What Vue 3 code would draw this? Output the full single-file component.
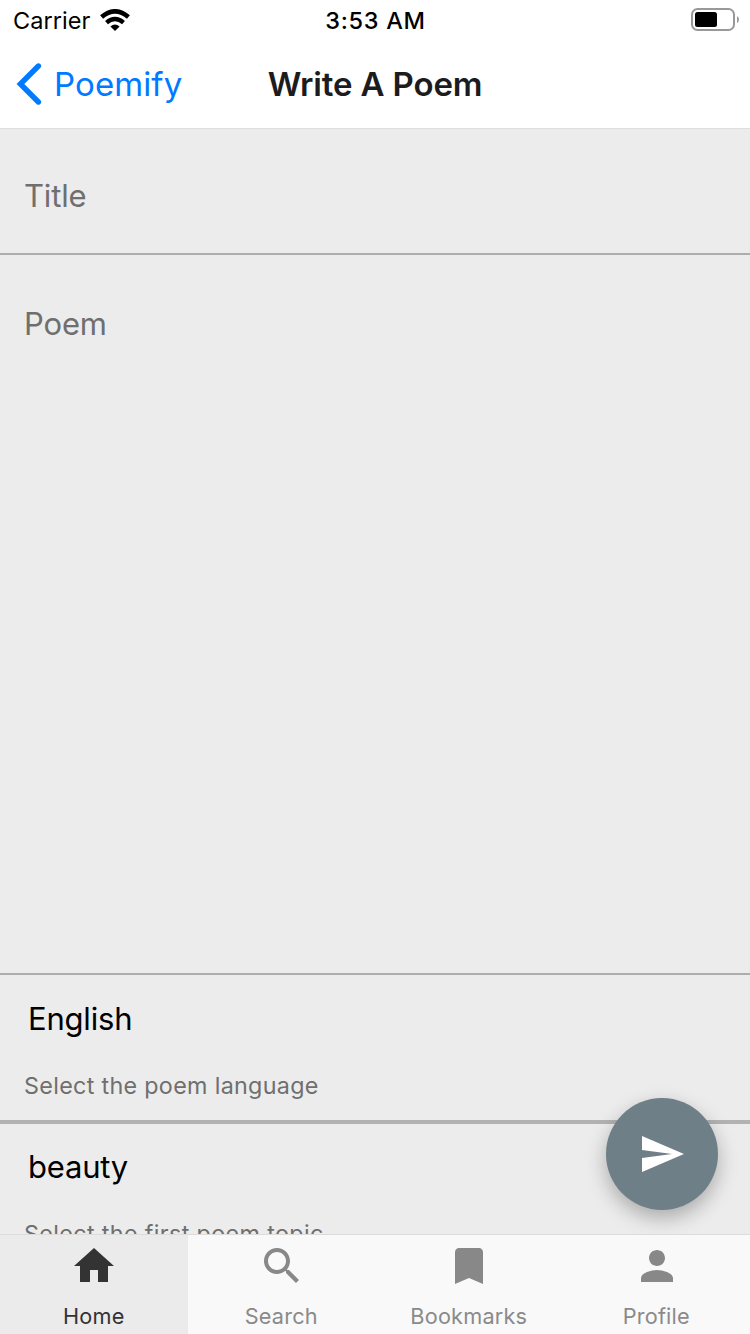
<script setup>
const tabs = [
  { name: 'Home', icon: 'M10 20v-6h4v6h5v-8h3L12 3 2 12h3v8z' },
  {
    name: 'Search',
    icon: 'M15.5 14h-.79l-.28-.27C15.41 12.59 16 11.11 16 9.5 16 5.91 13.09 3 9.5 3S3 5.91 3 9.5 5.91 16 9.5 16c1.61 0 3.09-.59 4.23-1.57l.27.28v.79l5 4.99L20.49 19l-4.99-5zm-6 0C7.01 14 5 11.99 5 9.5S7.01 5 9.5 5 14 7.01 14 9.5 11.99 14 9.5 14z',
  },
  { name: 'Bookmarks', icon: 'M17 3H7c-1.1 0-2 .9-2 2v16l7-3 7 3V5c0-1.1-.9-2-2-2z' },
  {
    name: 'Profile',
    icon: 'M12 12c2.21 0 4-1.79 4-4s-1.79-4-4-4-4 1.79-4 4 1.79 4 4 4zm0 2c-2.67 0-8 1.34-8 4v2h16v-2c0-2.66-5.33-4-8-4z',
  },
]
</script>

<template>
  <div class="screen">
    <header>
      <div class="status">
        <div class="side">
          <span class="carrier">Carrier</span>
          <svg class="wifi" width="30" height="22" viewBox="0 0 30 22">
            <path d="M15 22 10.4 17.4Q15 13.8 19.6 17.4Z" />
            <path d="M6.5 13.6Q15 6.4 23.5 13.6" fill="none" stroke="#000" stroke-width="4.4" />
            <path d="M1.6 8.1Q15-3.4 28.4 8.1" fill="none" stroke="#000" stroke-width="4.6" />
          </svg>
        </div>
        <span class="time">3:53 AM</span>
        <div class="side right">
          <svg class="battery" width="48" height="24" viewBox="0 0 48 24">
            <rect x="1" y="1" width="42" height="21" rx="5.5" fill="none" stroke="#999" stroke-width="2" />
            <rect x="4" y="4" width="22" height="15" rx="2.5" />
            <path d="M46 8q2 1 2 3.5T46 15z" fill="#999" />
          </svg>
        </div>
      </div>
      <nav class="nav">
        <a class="back">
          <svg width="26" height="42" viewBox="0 0 26 42">
            <path d="M22.4 3 4.4 21 22.4 39" fill="none" stroke="#007aff" stroke-width="5.4" stroke-linecap="round" />
          </svg>
          <span class="back-label">Poemify</span>
        </a>
        <h1>Write A Poem</h1>
        <span></span>
      </nav>
    </header>
    <main>
      <div class="field title"><span class="ph-title">Title</span></div>
      <div class="field poem"><span class="ph-poem">Poem</span></div>
      <div class="select">
        <div class="value">English</div>
        <div class="hint">Select the poem language</div>
      </div>
      <div class="select">
        <div class="value">beauty</div>
        <div class="hint topic">Select the first poem topic</div>
      </div>
    </main>
    <button class="fab">
      <svg width="48" height="48" viewBox="0 0 24 24"><path d="M2.01 21 23 12 2.01 3 2 10l15 2-15 2z" /></svg>
    </button>
    <footer>
      <div v-for="(tab, i) in tabs" :key="tab.name" class="tab" :class="{ active: i === 0 }">
        <svg width="48" height="48" viewBox="0 0 24 24"><path :d="tab.icon" /></svg>
        <span>{{ tab.name }}</span>
      </div>
    </footer>
  </div>
</template>

<style>
body { margin: 0; }
</style>

<style scoped>
.screen {
  position: relative;
  display: flex;
  flex-direction: column;
  width: 750px;
  height: 1334px;
  overflow: hidden;
  background: #ececec;
  font-family: Inter, "Liberation Sans", sans-serif;
}
header { height: 128px; flex: none; background: #fff; border-bottom: 1px solid #dedede; }
.status { display: grid; grid-template-columns: 1fr auto 1fr; height: 40px; color: #000; }
.side { display: flex; align-items: flex-start; }
.carrier { width: 87px; padding-left: 13px; box-sizing: border-box; font-size: 23.5px; line-height: 42px; letter-spacing: 0.05px; white-space: nowrap; flex: none; }
.wifi { margin: 9px 0 0 13px; }
.right { justify-content: flex-end; }
.battery { margin: 8px 11px 0 0; }
.time { font-size: 23.5px; font-weight: 500; line-height: 41px; letter-spacing: 0.7px; padding-left: 1px; }
.nav { display: grid; grid-template-columns: 1fr auto 1fr; height: 88px; align-items: center; }
.back { display: flex; align-items: center; padding-left: 16px; color: #007aff; }
.back-label { margin-left: 12px; font-size: 33px; line-height: 88px; letter-spacing: 0.1px; }
h1 { margin: 0; font-size: 33px; font-weight: 600; line-height: 88px; color: #1c1c1e; letter-spacing: -0.15px; }
main { flex: 1; min-height: 0; overflow: hidden; }
.field { box-sizing: border-box; padding-left: 24px; border-bottom: 2px solid #adadad; color: #6f6f6f; font-size: 31px; line-height: 40px; letter-spacing: -0.15px; }
.title { height: 126px; padding-top: 47px; }
.poem { height: 720px; padding-top: 49px; }
.select { box-sizing: border-box; height: 149px; padding: 24px 0 0 28px; border-bottom: 4px solid #b2b2b2; }
.select + .select { padding-top: 23px; }
.value { font-size: 31px; line-height: 40px; color: #000; letter-spacing: -0.2px; }
.hint { margin: 32px 0 0 -4px; font-size: 23.3px; line-height: 30px; color: #6f6f6f; letter-spacing: 0.32px; white-space: nowrap; }
.topic { letter-spacing: 0.37px; }
.fab {
  position: absolute;
  right: 32px;
  bottom: 124px;
  display: flex;
  align-items: center;
  justify-content: center;
  width: 112px;
  height: 112px;
  padding: 0;
  border: 0;
  border-radius: 50%;
  background: #6e7f87;
  box-shadow: 0 8px 20px rgba(0, 0, 0, 0.28);
  fill: #fff;
}
footer { position: relative; display: flex; flex: none; height: 99px; border-top: 1px solid #dcdcdc; background: #f9f9f9; }
.tab { display: flex; flex: 1; flex-direction: column; align-items: center; padding-top: 7px; box-sizing: border-box; color: #8a8a8a; fill: #888; }
.tab svg { flex: none; margin-left: 1px; }
.tab span { margin-top: 11px; font-size: 21.7px; line-height: 30px; letter-spacing: 0.2px; }
.active { background: #ebebeb; color: #333; fill: #333; }
</style>
